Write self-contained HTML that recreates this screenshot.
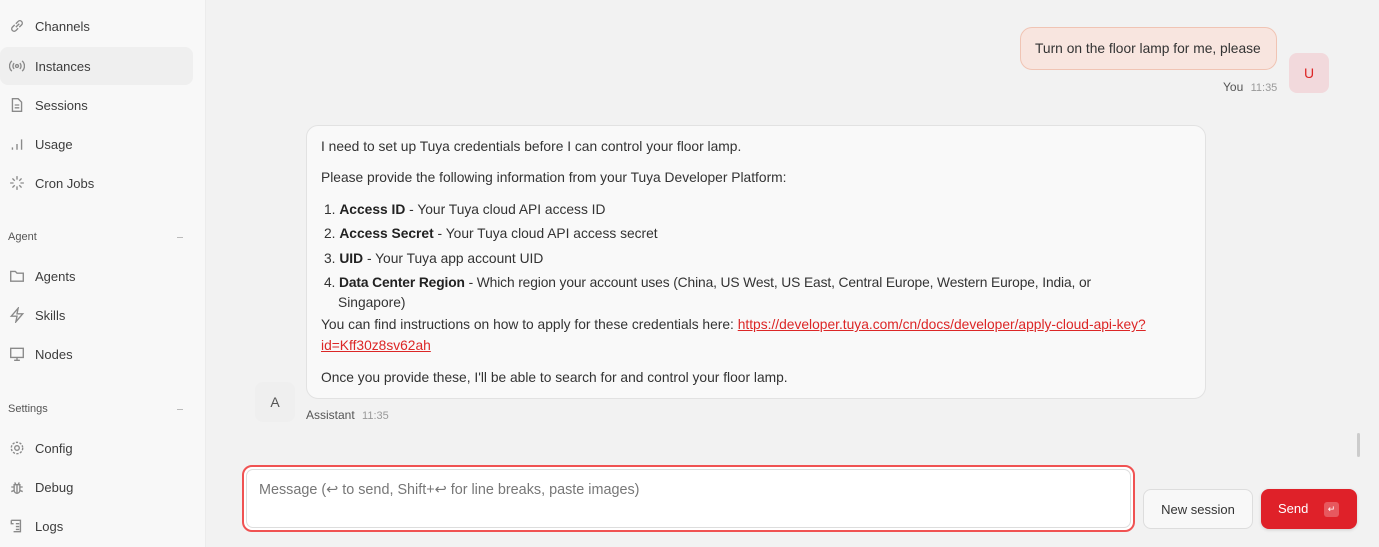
<!DOCTYPE html>
<html><head><style>
*{box-sizing:border-box;margin:0;padding:0}
body{width:1379px;height:547px;overflow:hidden;background:#f2f2f2;font-family:"Liberation Sans",sans-serif;position:relative;color:#333}
.sb{position:absolute;left:0;top:0;width:206px;height:547px;background:#f8f8f8;border-right:1px solid #ececec}
.it{position:absolute;left:0;width:193px;height:38px;font-size:13px;color:#3c3c3c}
.it svg{position:absolute;left:9px;top:11px;width:16px;height:16px;fill:none;stroke:#8a8a8a;stroke-width:1.2}
.it span{position:absolute;left:35px;top:12px}
.act{background:#efefef;border-radius:8px}
.sec{position:absolute;left:8px;font-size:11px;color:#555}
.dash{position:absolute;left:177px;width:6px;height:1px;background:#bbb}
.t{position:absolute;font-size:14px;color:#333;white-space:nowrap}
.m{font-size:13.8px}
b{font-weight:bold;color:#222}
a{color:#dc2626}
</style></head><body>
<div class="sb">
<div class="it" style="top:7px"><svg viewBox="0 0 14 14"><path d="M6 8l3-3M5 6L3 8a2 2 0 003 3l2-2M9 8l2-2a2 2 0 00-3-3L6 5"/></svg><span>Channels</span></div>
<div class="it act" style="top:47px"><svg viewBox="0 0 14 14"><circle cx="7" cy="7" r="1.3"/><path d="M4.5 4.5a3.5 3.5 0 000 5M9.5 4.5a3.5 3.5 0 010 5M2.5 2.5a6 6 0 000 9M11.5 2.5a6 6 0 010 9"/></svg><span>Instances</span></div>
<div class="it" style="top:86px"><svg viewBox="0 0 14 14"><path d="M3 1.5h5l3 3v8H3zM5 7h4M5 9.5h4"/></svg><span>Sessions</span></div>
<div class="it" style="top:125px"><svg viewBox="0 0 14 14"><path d="M3 12v-2M7 12V7M11 12V3"/></svg><span>Usage</span></div>
<div class="it" style="top:164px"><svg viewBox="0 0 14 14"><path d="M7 1v3M7 10v3M1 7h3M10 7h3M3 3l2 2M9 9l2 2M3 11l2-2M9 5l2-2"/></svg><span>Cron Jobs</span></div>
<div class="sec" style="top:231px">Agent</div><div class="dash" style="top:237px"></div>
<div class="it" style="top:257px"><svg viewBox="0 0 14 14"><path d="M1.5 3h4l1.5 1.5h5.5v7h-11z"/></svg><span>Agents</span></div>
<div class="it" style="top:296px"><svg viewBox="0 0 14 14"><path d="M8 1L2 8h5l-1 5 6-7H7z"/></svg><span>Skills</span></div>
<div class="it" style="top:335px"><svg viewBox="0 0 14 14"><path d="M1.5 2h11v8h-11zM7 10v2.5M4.5 12.5h5"/></svg><span>Nodes</span></div>
<div class="sec" style="top:403px">Settings</div><div class="dash" style="top:409px"></div>
<div class="it" style="top:429px"><svg viewBox="0 0 14 14"><circle cx="7" cy="7" r="2"/><circle cx="7" cy="7" r="5" stroke-dasharray="2 1.2"/></svg><span>Config</span></div>
<div class="it" style="top:468px"><svg viewBox="0 0 14 14"><path d="M4.5 5h5v5a2.5 2.5 0 01-5 0zM7 5v7M2 7h2.5M9.5 7H12M2 11l2.5-1M12 11l-2.5-1M5 3l1 2M9 3L8 5"/></svg><span>Debug</span></div>
<div class="it" style="top:507px"><svg viewBox="0 0 14 14"><path d="M2 2h8v10H4M2 2v3h2M6 5h3M6 7.5h3M6 10h3"/></svg><span>Logs</span></div>
</div>

<div style="position:absolute;left:1020px;top:27px;width:257px;height:43px;background:#f8e5df;border:1px solid #f0c4b4;border-radius:12px"></div>
<div class="t m" style="left:1035px;top:41px">Turn on the floor lamp for me, please</div>
<div class="t" style="left:1223px;top:80px;font-size:12px;color:#555">You <span style="color:#999;font-size:11px;margin-left:4px">11:35</span></div>
<div style="position:absolute;left:1289px;top:53px;width:40px;height:40px;background:#f2d9dc;border-radius:8px;color:#dc2626;font-size:14px;display:flex;align-items:center;justify-content:center">U</div>

<div style="position:absolute;left:306px;top:125px;width:900px;height:274px;background:#f9f9f9;border:1px solid #e2e2e2;border-radius:12px"></div>
<div class="t m" style="left:321px;top:139px">I need to set up Tuya credentials before I can control your floor lamp.</div>
<div class="t m" style="left:321px;top:170px">Please provide the following information from your Tuya Developer Platform:</div>
<div class="t m" style="left:324px;top:202px">1. <b>Access ID</b> - Your Tuya cloud API access ID</div>
<div class="t m" style="left:324px;top:226px">2. <b>Access Secret</b> - Your Tuya cloud API access secret</div>
<div class="t m" style="left:324px;top:251px">3. <b>UID</b> - Your Tuya app account UID</div>
<div class="t m" style="left:324px;top:275px;letter-spacing:-0.12px">4. <b>Data Center Region</b> - Which region your account uses (China, US West, US East, Central Europe, Western Europe, India, or</div>
<div class="t m" style="left:338px;top:295px">Singapore)</div>
<div class="t m" style="left:321px;top:317px">You can find instructions on how to apply for these credentials here: <a href="#">https://developer.tuya.com/cn/docs/developer/apply-cloud-api-key?</a></div>
<div class="t m" style="left:321px;top:338px"><a href="#">id=Kff30z8sv62ah</a></div>
<div class="t m" style="left:321px;top:370px">Once you provide these, I'll be able to search for and control your floor lamp.</div>
<div style="position:absolute;left:255px;top:382px;width:40px;height:40px;background:#efefef;border-radius:8px;color:#555;font-size:14px;display:flex;align-items:center;justify-content:center">A</div>
<div class="t" style="left:306px;top:408px;font-size:12px;color:#555">Assistant <span style="color:#999;font-size:11px;margin-left:4px">11:35</span></div>
<div style="position:absolute;left:1357px;top:433px;width:3px;height:24px;background:#ccc;border-radius:2px"></div>

<div style="position:absolute;left:242px;top:465px;width:893px;height:67px;border:2px solid #f05252;border-radius:10px;background:#fff"></div>
<div style="position:absolute;left:246px;top:469px;width:885px;height:59px;border:1px solid #ddd;border-radius:7px;background:#fff"></div>
<div class="t" style="left:259px;top:482px;color:#777;font-size:14.4px">Message (↩ to send, Shift+↩ for line breaks, paste images)</div>
<div style="position:absolute;left:1143px;top:489px;width:110px;height:40px;background:#f8f8f8;border:1px solid #ddd;border-radius:8px;font-size:13px;color:#333;display:flex;align-items:center;justify-content:center">New session</div>
<div style="position:absolute;left:1261px;top:489px;width:96px;height:40px;background:#df2129;border-radius:8px;font-size:13px;color:#fff;box-shadow:0 1px 3px rgba(0,0,0,.15)"><span style="position:absolute;left:17px;top:12px">Send</span><span style="position:absolute;left:63px;top:13px;width:15px;height:15px;background:rgba(255,255,255,.25);border-radius:3px;font-size:9px;text-align:center;line-height:15px">↵</span></div>
</body></html>
